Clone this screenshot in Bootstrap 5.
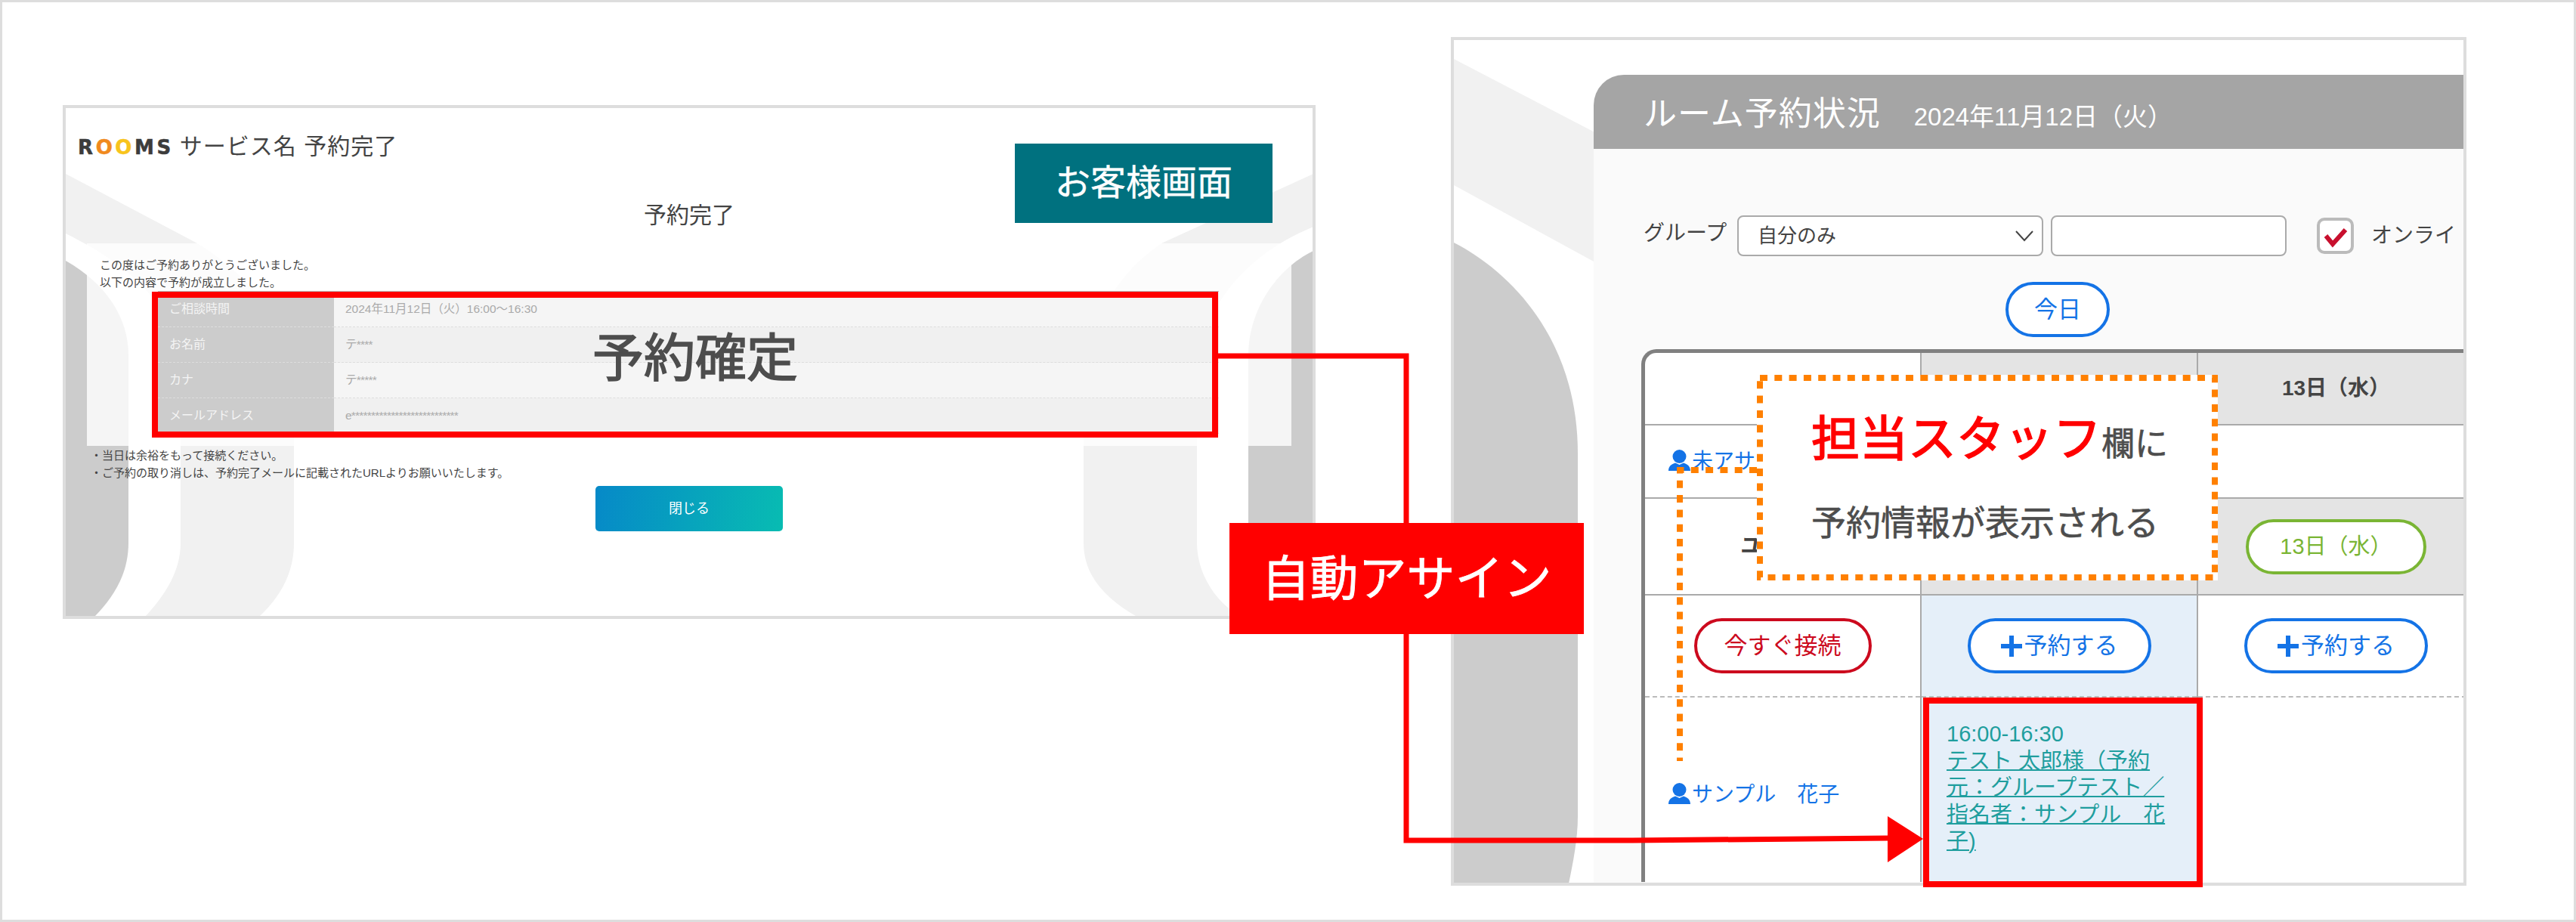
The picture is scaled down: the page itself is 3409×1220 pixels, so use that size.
<!DOCTYPE html>
<html lang="ja">
<head>
    <meta charset="UTF-8">
    <meta name="viewport" content="width=device-width, initial-scale=1.0">
    <title>ルーム予約状況</title>
    <link href="https://cdn.jsdelivr.net/npm/bootstrap@5.3.0/dist/css/bootstrap.min.css" rel="stylesheet">
    <style>
        body { margin: 0; background: #fff; font-family: "Liberation Sans", "Noto Sans CJK JP", sans-serif; color: #444; }
        .sheet { position: relative; width: 3409px; height: 1220px; border: 3px solid #ddd; overflow: hidden; background: #fff; }

        /* 左: お客様画面 */
        .shot { position: relative; border: 4px solid #ddd; background: #fff; overflow: hidden; flex: none; }
        .shot-left { width: 1658px; height: 680px; margin: 136px 0 0 80px; }
        .shot-right { width: 1344px; height: 1123px; margin: 46px 0 0 179px; }
        .shot-bg { position: absolute; inset: 0; width: 100%; height: 100%; }
        .shot-in { position: relative; }
        .done-head { height: 122px; padding: 33px 0 0 16px; font-size: 30px; line-height: 36px; letter-spacing: 1px; }
        .logo { font-family: "DejaVu Sans", sans-serif; font-weight: 700; font-size: 26px; letter-spacing: 3.6px; margin-right: 8px; color: #3c3c3c; -webkit-text-stroke: .5px currentColor; }
        .logo-o1 { color: #f08a1e; }
        .logo-o2 { color: #f8c41c; }
        .done-title { height: 40px; margin-bottom: 17px; font-size: 30px; line-height: 40px; text-align: center; }
        .done-veil { margin: 0 28px; height: 268px; padding-top: 17px; background: rgba(255, 255, 255, .8); }
        .done-msg { padding-left: 17px; font-size: 15px; line-height: 23px; }
        .done-table { width: 1404px; margin-left: 94px; table-layout: fixed; border-top: 1px solid #bbb; }
        .done-table.table th, .done-table.table td { height: 47px; padding: 0 0 0 15px; font-size: 15.5px; font-weight: 400; vertical-align: middle; border-bottom: 1px dashed #ddd; }
        .done-table.table th { width: 233px; background: #ccc; color: #f4f4f4; font-size: 16px; }
        .done-table.table td { color: #aaa; background: #f5f5f5; }
        .done-table.table tr:nth-child(even) td { background: #f0f0f0; }
        .done-masked { letter-spacing: -.8px; }
        .done-notes { padding: 1px 0 0 33px; font-size: 15px; line-height: 23px; }
        .btn-close-page { display: block; width: 248px; height: 60px; margin: 6px auto 0; border: 0; border-radius: 5px; color: #fff; font-size: 18px; background: linear-gradient(100deg, #0689c8, #08bcb2); }

        /* 右: 管理画面 */
        .rv-card { width: 1152px; height: 1069px; margin: 46px 0 0 185px; border: 0; border-radius: 40px 0 0 0; background: #fafafa; overflow: hidden; }
        .rv-card .card-header { height: 98px; padding: 27px 0 0 66px; border: 0; border-radius: 0; background: #a5a5a5; color: #fff; font-size: 33px; line-height: 50px; white-space: nowrap; }
        .rv-name { font-size: 44px; letter-spacing: 1px; margin-right: 44px; }
        .rv-card .card-body { padding: 88px 0 0 0; }
        .rv-form { padding-left: 66px; font-size: 28px; white-space: nowrap; }
        .rv-label { width: 115px; margin-right: 9px; line-height: 1; margin-top: -6px; }
        .rv-select.form-select { width: 405px; height: 54px; flex: none; margin-right: 10px; padding: 0 0 0 25px; border: 2px solid #aaa; border-radius: 8px; font-size: 26px; color: #444; background-image: url("data:image/svg+xml,%3csvg xmlns='http://www.w3.org/2000/svg' viewBox='0 0 24 16'%3e%3cpath fill='none' stroke='%23444' stroke-width='2' d='M1 2l11 12L23 2'/%3e%3c/svg%3e"); background-size: 24px 16px; background-position: right 11px center; }
        .rv-input.form-control { width: 312px; height: 54px; flex: none; margin-right: 40px; border: 2px solid #aaa; border-radius: 8px; }
        .rv-check { width: 49px; height: 48px; flex: none; margin-right: 23px; border: 4px solid #bbb; border-radius: 10px; background: #fff; }
        .rv-check svg { display: block; }
        .pill { display: inline-flex; align-items: center; justify-content: center; height: 73px; padding: 0; border: 4px solid #1473e6; background: #fff; color: #1473e6; font-size: 31px; line-height: 1; white-space: nowrap; }
        .pill:hover { background: #fff; color: #1473e6; border-color: #1473e6; }
        .rv-today { margin: 34px 0 16px 545px; }
        .pill-today { width: 138px; }
        .pill-red { width: 235px; border-color: #cc0a1e; color: #cc0a1e; }
        .pill-plus { width: 243px; }
        .pill-plus svg { margin-right: 3px; }
        .pill-green { width: 239px; border-color: #7ab534; color: #7ab534; font-size: 29px; background: #fff; }
        .rv-wrap { width: 1102px; margin-left: 63px; border: solid #808080; border-width: 5px 0 0 5px; border-radius: 20px 0 0 0; overflow: hidden; background: #fff; }
        .rv-table { width: 1097px; table-layout: fixed; font-size: 28px; }
        .rv-table.table > tbody > tr > td { padding: 0; text-align: center; vertical-align: middle; border-bottom: 2px solid #aaa; border-left: 2px solid #aaa; }
        .rv-table.table > tbody > tr > td:first-child { width: 365px; border-left: 0; }
        .rv-table.table > tbody > tr > td.rv-gray { background: #e4e4e4; }
        .rv-table.table > tbody > tr > td.rv-today-col { background: #e5eff9; }
        .rv-table.table > tbody > tr.rv-r1 > td { height: 95px; }
        .rv-table.table > tbody > tr.rv-r2 > td { height: 97px; }
        .rv-table.table > tbody > tr.rv-r3 > td { height: 128px; }
        .rv-table.table > tbody > tr.rv-r4 > td { height: 135px; border-bottom: 2px dashed #bbb; }
        .rv-table.table > tbody > tr.rv-r5 > td { height: 245px; border-bottom: 0; }
        .rv-day { font-weight: 700; color: #444; }
        .rv-staff { display: flex; align-items: center; padding-left: 31px; color: #1473e6; text-align: left; white-space: nowrap; }
        .rv-staff svg { margin: -4px 2px 0 0; flex: none; }
        .rv-r5 .rv-staff { padding-top: 14px; }
        .rv-table.table > tbody > tr.rv-r5 > td.rv-booked { padding: 31px 38px 0 33px; text-align: left; vertical-align: top; font-size: 29px; line-height: 35.5px; color: #1f9e9e; }
        .rv-booked a { color: #1f9e9e; text-decoration-thickness: 2px; }

        /* 注釈 */
        .note-lines { position: absolute; left: -3px; top: -3px; width: 3409px; height: 1220px; pointer-events: none; }
        .note-tag { position: absolute; display: flex; align-items: center; justify-content: center; color: #fff; white-space: nowrap; }
        .tag-guest { left: 1340px; top: 187px; width: 341px; height: 105px; background: #00717f; font-size: 47px; -webkit-text-stroke: .4px #fff; }
        .tag-auto { left: 1624px; top: 689px; width: 469px; height: 147px; background: #f00; font-size: 64px; -webkit-text-stroke: .8px #fff; }
        .note-big { position: absolute; left: 781px; top: 426px; font-size: 68px; line-height: 90px; color: #4d4d4d; -webkit-text-stroke: 1.6px #4d4d4d; white-space: nowrap; }
        .note-frame { position: absolute; border: 8px solid #f00; }
        .frame-done { left: 198px; top: 383px; width: 1411px; height: 193px; }
        .frame-booked { left: 2542px; top: 920px; width: 370px; height: 251px; }
        .note-staff { position: absolute; left: 2322px; top: 493px; width: 610px; height: 272px; padding-left: 72px; background: #fff; color: #4d4d4d; white-space: nowrap; }
        .staff-l1 { height: 92px; padding-top: 39px; font-size: 44px; line-height: 92px; box-sizing: content-box; -webkit-text-stroke: .6px #4d4d4d; }
        .staff-l1 b { font-size: 64px; font-weight: 400; color: #f00; -webkit-text-stroke: 1.6px #f00; }
        .staff-l2 { margin-top: 30px; font-size: 46px; line-height: 70px; -webkit-text-stroke: .6px #4d4d4d; }
    </style>
</head>
<body>
    <div class="sheet d-flex align-items-start">

        <!-- お客様画面 -->
        <section class="shot shot-left">
            <svg class="shot-bg" viewBox="87 143 1650 672" preserveAspectRatio="none">
                <path fill="#f1f1f1" d="M87 230L261 322C340 370 389 440 389 520V718C389 760 370 790 344 815H193C225 780 239 750 239 718V500C239 420 190 360 87 309Z"/>
                <path fill="#ccc" d="M87 345C140 375 170 420 170 470V718C170 760 150 790 126 815H87Z"/>
                <path fill="#f1f1f1" d="M1738 230L1537 322C1480 360 1434 430 1434 520V718C1434 760 1460 790 1503 815H1640C1600 790 1584 750 1584 718V500C1584 420 1640 340 1738 300Z"/>
                <path fill="#ccc" d="M1738 332C1690 355 1652 410 1652 470V815H1738Z"/>
            </svg>
            <div class="shot-in">
                <div class="done-head"><span class="logo">R<span class="logo-o1">O</span><span class="logo-o2">O</span>MS</span>サービス名 予約完了</div>
                <div class="done-title">予約完了</div>
                <div class="done-veil">
                    <div class="done-msg">この度はご予約ありがとうございました。<br>以下の内容で予約が成立しました。</div>
                    <table class="table done-table mb-0">
                        <tbody>
                            <tr><th>ご相談時間</th><td>2024年11月12日（火）16:00～16:30</td></tr>
                            <tr><th>お名前</th><td class="done-masked">テ****</td></tr>
                            <tr><th>カナ</th><td class="done-masked">テ*****</td></tr>
                            <tr><th>メールアドレス</th><td class="done-masked">e***************************</td></tr>
                        </tbody>
                    </table>
                </div>
                <div class="done-notes">・当日は余裕をもって接続ください。<br>・ご予約の取り消しは、予約完了メールに記載されたURLよりお願いいたします。</div>
                <button type="button" class="btn btn-close-page">閉じる</button>
            </div>
        </section>

        <!-- 担当者画面 -->
        <section class="shot shot-right">
            <svg class="shot-bg" viewBox="1924 53 1336 1115" preserveAspectRatio="none">
                <path fill="#f1f1f1" d="M1924 78L2120 180V352L1924 245Z"/>
                <path fill="#ccc" d="M1924 321C2000 360 2088 450 2088 600V1080C2088 1110 2082 1140 2076 1169H1924Z"/>
            </svg>
            <div class="card rv-card shot-in">
                <div class="card-header"><span class="rv-name">ルーム予約状況</span>2024年11月12日（火）</div>
                <div class="card-body">
                    <div class="rv-form d-flex align-items-center">
                        <span class="rv-label">グループ</span>
                        <select class="form-select rv-select"><option>自分のみ</option></select>
                        <input type="text" class="form-control rv-input">
                        <span class="rv-check">
                            <svg width="41" height="40" viewBox="0 0 41 40"><path fill="none" stroke="#c8102e" stroke-width="6" d="M8 20L17 31L34 12"/></svg>
                        </span>
                        <span>オンライ</span>
                    </div>
                    <div class="rv-today"><button type="button" class="btn pill pill-today rounded-pill">今日</button></div>
                    <div class="rv-wrap">
                        <table class="table rv-table mb-0">
                            <tbody>
                                <tr class="rv-r1"><td></td><td class="rv-gray"></td><td class="rv-gray rv-day">13日（水）</td></tr>
                                <tr class="rv-r2">
                                    <td><div class="rv-staff"><svg width="29" height="28" viewBox="0 0 29 28"><circle cx="14.5" cy="9" r="9" fill="#1473e6"/><path fill="#1473e6" d="M0 28C0 22 4 19 9 17.500L14.500 20L20 17.500C25 19 29 22 29 28Z"/></svg>未アサイン</div></td>
                                    <td></td><td></td>
                                </tr>
                                <tr class="rv-r3">
                                    <td class="rv-day">ユーザー</td>
                                    <td class="rv-gray"></td>
                                    <td class="rv-gray"><button type="button" class="btn pill pill-green rounded-pill">13日（水）</button></td>
                                </tr>
                                <tr class="rv-r4">
                                    <td><button type="button" class="btn pill pill-red rounded-pill">今すぐ接続</button></td>
                                    <td class="rv-today-col"><button type="button" class="btn pill pill-plus rounded-pill"><svg width="28" height="32" viewBox="0 0 28 32"><path fill="#1473e6" d="M11 2h6v11h11v6H17v11h-6V19H0v-6h11z"/></svg>予約する</button></td>
                                    <td><button type="button" class="btn pill pill-plus rounded-pill"><svg width="28" height="32" viewBox="0 0 28 32"><path fill="#1473e6" d="M11 2h6v11h11v6H17v11h-6V19H0v-6h11z"/></svg>予約する</button></td>
                                </tr>
                                <tr class="rv-r5">
                                    <td><div class="rv-staff"><svg width="29" height="28" viewBox="0 0 29 28"><circle cx="14.5" cy="9" r="9" fill="#1473e6"/><path fill="#1473e6" d="M0 28C0 22 4 19 9 17.500L14.500 20L20 17.500C25 19 29 22 29 28Z"/></svg>サンプル　花子</div></td>
                                    <td class="rv-today-col rv-booked">16:00-16:30<br><a href="#">テスト 太郎様（予約元：グループテスト／指名者：サンプル　花子)</a></td>
                                    <td></td>
                                </tr>
                            </tbody>
                        </table>
                    </div>
                </div>
            </div>
        </section>

        <!-- 注釈 -->
        <div class="note-staff">
            <div class="staff-l1"><b>担当スタッフ</b>欄に</div>
            <div class="staff-l2">予約情報が表示される</div>
        </div>
        <svg class="note-lines" viewBox="0 0 3409 1220">
            <path fill="none" stroke="#f00" stroke-width="7" d="M1612 471H1861V1112H2160L2500 1109"/>
            <path fill="#f00" d="M2498 1080L2545 1110L2498 1141Z"/>
            <rect x="2329" y="500" width="602" height="264" fill="none" stroke="#ff8000" stroke-width="8" stroke-dasharray="10 9.3"/>
            <path fill="none" stroke="#ff8000" stroke-width="8" stroke-dasharray="10 9.3" d="M2325 622H2223V1007"/>
        </svg>
        <div class="note-tag tag-guest">お客様画面</div>
        <div class="note-big">予約確定</div>
        <div class="note-frame frame-done"></div>
        <div class="note-frame frame-booked"></div>
        <div class="note-tag tag-auto">自動アサイン</div>
    </div>

    <script src="https://cdn.jsdelivr.net/npm/bootstrap@5.3.0/dist/js/bootstrap.bundle.min.js"></script>
</body>
</html>
